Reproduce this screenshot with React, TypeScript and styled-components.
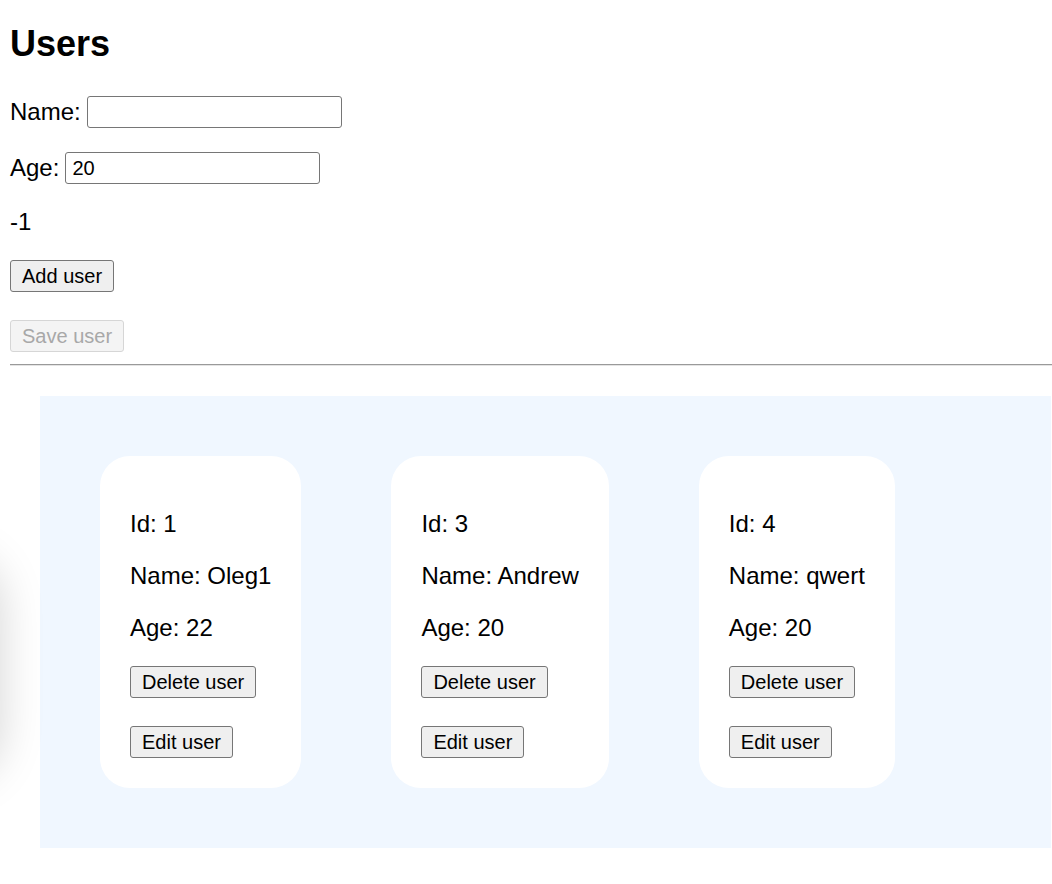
import React from "react";
import styled, { createGlobalStyle } from "styled-components";

const GlobalStyle = createGlobalStyle`
  html, body {
    margin: 0;
    padding: 0;
    background: #ffffff;
    overflow: hidden;
  }
  body {
    font-family: "Liberation Sans", Arial, sans-serif;
    font-size: 24px;
    color: #000;
  }
`;

const Page = styled.div`
  position: relative;
  padding: 10px 0 36px 10px;
`;

const Title = styled.h2`
  margin: 13px 0 31px;
  font-size: 36px;
  line-height: 42px;
  font-weight: 700;
`;

const FormRow = styled.label`
  display: flex;
  align-items: center;
  gap: 6px;
  height: 32px;
  margin-bottom: 24px;
  line-height: 28px;
`;

const TextInput = styled.input`
  box-sizing: border-box;
  width: 255px;
  height: 32px;
  padding: 1px 6px;
  border: 1px solid #767676;
  border-radius: 3px;
  font-family: "Liberation Sans", Arial, sans-serif;
  font-size: 20px;
  color: #000;
  background: #fff;
  outline: none;
`;

const Counter = styled.div`
  line-height: 28px;
  height: 28px;
  margin-bottom: 24px;
`;

const Button = styled.button`
  box-sizing: border-box;
  display: block;
  height: 32px;
  padding: 0 11px;
  border: 1px solid #767676;
  border-radius: 3px;
  background: #efefef;
  font-family: "Liberation Sans", Arial, sans-serif;
  font-size: 20px;
  line-height: 29px;
  color: #000;

  &:disabled {
    border-color: #d6d6d6;
    background: #f4f4f4;
    color: #a8a8a8;
  }
`;

const TopButtons = styled.div`
  display: flex;
  flex-direction: column;
  align-items: flex-start;
  gap: 28px;
`;

const Divider = styled.hr`
  margin: 12px 0 30px;
  height: 0;
  border: none;
  border-top: 1px solid #9a9a9a;
  border-bottom: 1px solid #e4e4e4;
`;

const Board = styled.div`
  display: flex;
  align-items: flex-start;
  gap: 90px;
  margin-left: 30px;
  margin-right: 1px;
  padding: 60px;
  background: #f0f7ff;
`;

const Card = styled.div`
  background: #ffffff;
  border-radius: 30px;
  padding: 30px;
`;

const Field = styled.p`
  margin: 24px 0;
  line-height: 28px;
  white-space: nowrap;
`;

const CardButtons = styled.div`
  display: flex;
  flex-direction: column;
  align-items: flex-start;
  gap: 28px;
`;

const EdgeShadow = styled.div`
  position: absolute;
  left: -80px;
  top: 575px;
  width: 60px;
  height: 185px;
  border-radius: 30px;
  box-shadow: 0 0 45px 20px rgba(0, 0, 0, 0.17);
  pointer-events: none;
`;

type User = { id: number; name: string; age: number };

const users: User[] = [
  { id: 1, name: "Oleg1", age: 22 },
  { id: 3, name: "Andrew", age: 20 },
  { id: 4, name: "qwert", age: 20 },
];

export default function App() {
  return (
    <>
      <GlobalStyle />
      <Page>
        <Title>Users</Title>
        <FormRow>
          Name:
          <TextInput defaultValue="" />
        </FormRow>
        <FormRow>
          Age:
          <TextInput defaultValue="20" />
        </FormRow>
        <Counter>-1</Counter>
        <TopButtons>
          <Button>Add user</Button>
          <Button disabled>Save user</Button>
        </TopButtons>
        <Divider />
        <Board>
          {users.map((u) => (
            <Card key={u.id}>
              <Field>Id: {u.id}</Field>
              <Field>Name: {u.name}</Field>
              <Field>Age: {u.age}</Field>
              <CardButtons>
                <Button>Delete user</Button>
                <Button>Edit user</Button>
              </CardButtons>
            </Card>
          ))}
        </Board>
        <EdgeShadow />
      </Page>
    </>
  );
}
